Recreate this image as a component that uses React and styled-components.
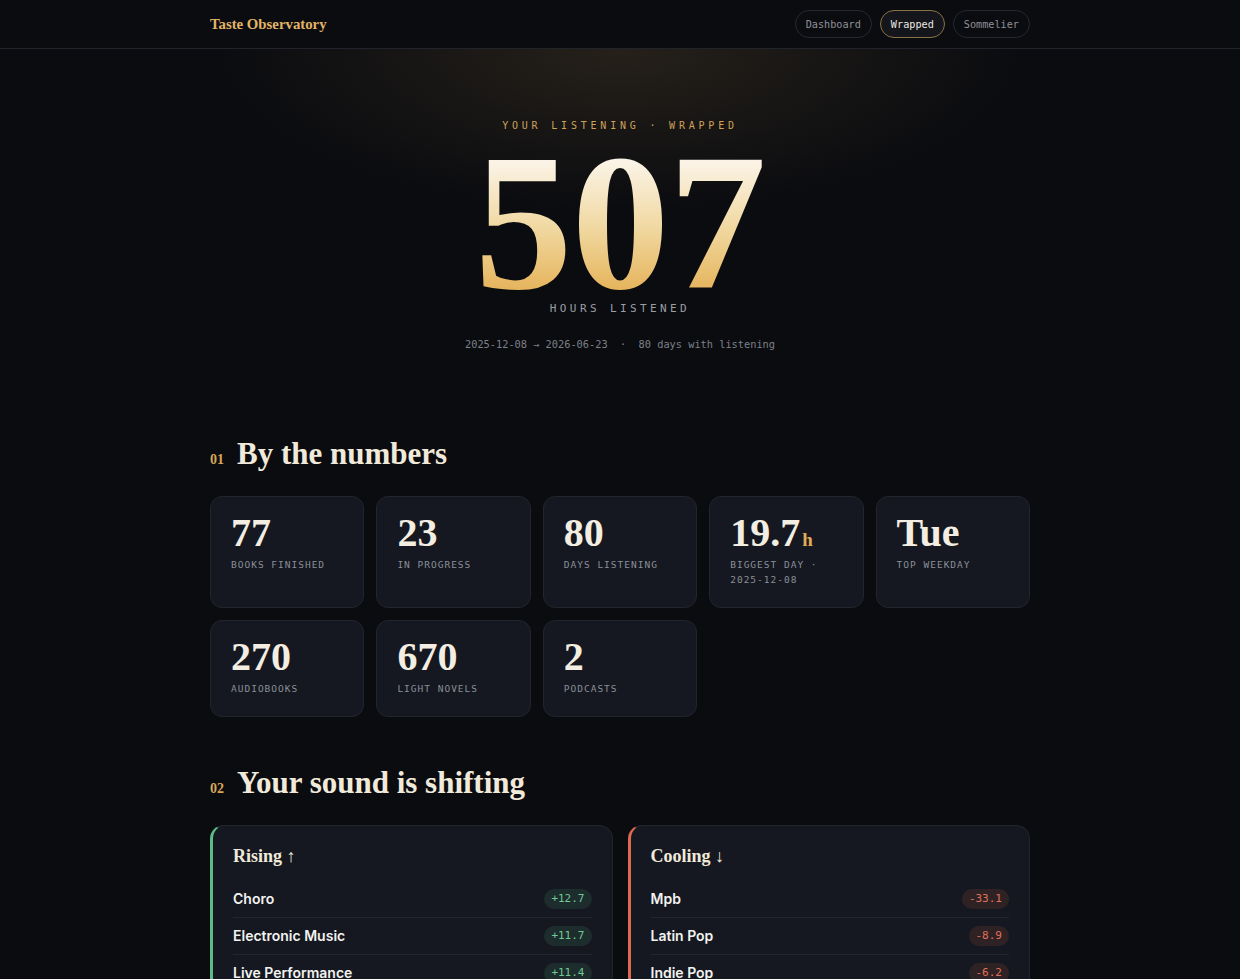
import styled, { createGlobalStyle } from "styled-components";

const serif = `"Liberation Serif", "DejaVu Serif", serif`;
const mono = `"DejaVu Sans Mono", "Liberation Mono", monospace`;
const sans = `Inter, "Noto Sans", sans-serif`;

const stats = [
  { value: "77", label: "Books finished" },
  { value: "23", label: "In progress" },
  { value: "80", label: "Days listening" },
  { value: "19.7", unit: "h", label: "Biggest day · 2025-12-08" },
  { value: "Tue", label: "Top weekday" },
  { value: "270", label: "Audiobooks" },
  { value: "670", label: "Light novels" },
  { value: "2", label: "Podcasts" },
];

const rising = [
  { name: "Choro", delta: "+12.7" },
  { name: "Electronic Music", delta: "+11.7" },
  { name: "Live Performance", delta: "+11.4" },
];

const cooling = [
  { name: "Mpb", delta: "-33.1" },
  { name: "Latin Pop", delta: "-8.9" },
  { name: "Indie Pop", delta: "-6.2" },
];

const App = () => {
  return (
    <>
      <GlobalStyle />
      <Nav>
        <NavInner>
          <Logo>Taste Observatory</Logo>
          <Pills>
            <Pill>Dashboard</Pill>
            <Pill active>Wrapped</Pill>
            <Pill>Sommelier</Pill>
          </Pills>
        </NavInner>
      </Nav>

      <Hero>
        <Eyebrow>Your listening · Wrapped</Eyebrow>
        <BigNumber>507</BigNumber>
        <BigLabel>Hours listened</BigLabel>
        <Range>2025-12-08 → 2026-06-23 &nbsp;·&nbsp; 80 days with listening</Range>
      </Hero>

      <Main>
        <Section>
          <SectionHead>
            <SectionNum>01</SectionNum>
            <SectionTitle>By the numbers</SectionTitle>
          </SectionHead>
          <StatGrid>
            {stats.map((s) => (
              <StatCard key={s.label}>
                <StatValue>
                  {s.value}
                  {s.unit && <StatUnit>{s.unit}</StatUnit>}
                </StatValue>
                <StatLabel>{s.label}</StatLabel>
              </StatCard>
            ))}
          </StatGrid>
        </Section>

        <Section>
          <SectionHead>
            <SectionNum>02</SectionNum>
            <SectionTitle>Your sound is shifting</SectionTitle>
          </SectionHead>
          <ShiftGrid>
            <ShiftPanel tone="up">
              <PanelTitle>Rising ↑</PanelTitle>
              {rising.map((r) => (
                <ShiftRow key={r.name}>
                  <Genre>{r.name}</Genre>
                  <Delta tone="up">{r.delta}</Delta>
                </ShiftRow>
              ))}
            </ShiftPanel>
            <ShiftPanel tone="down">
              <PanelTitle>Cooling ↓</PanelTitle>
              {cooling.map((r) => (
                <ShiftRow key={r.name}>
                  <Genre>{r.name}</Genre>
                  <Delta tone="down">{r.delta}</Delta>
                </ShiftRow>
              ))}
            </ShiftPanel>
          </ShiftGrid>
        </Section>
      </Main>
    </>
  );
};

const GlobalStyle = createGlobalStyle`
  body {
    margin: 0;
    background: #0b0c10;
    color: #ece6da;
    font-family: ${sans};
  }
`;

const Nav = styled.header`
  height: 48px;
  border-bottom: 1px solid #22242b;
  background: #0b0c10;
`;

const NavInner = styled.div`
  max-width: 820px;
  height: 100%;
  margin: 0 auto;
  display: flex;
  align-items: center;
  justify-content: space-between;
`;

const Logo = styled.div`
  font-family: ${serif};
  font-weight: 700;
  font-size: 14.8px;
  color: #e2b466;
`;

const Pills = styled.nav`
  display: flex;
  gap: 8px;
`;

const Pill = styled.a`
  height: 26px;
  padding: 0 10px;
  display: flex;
  align-items: center;
  border-radius: 14px;
  font-family: ${mono};
  font-size: 10.2px;
  color: ${(p) => (p.active ? "#ece8e0" : "#8e9198")};
  border: 1px solid ${(p) => (p.active ? "#8a7146" : "#262830")};
  background: ${(p) => (p.active ? "#15161b" : "transparent")};
`;

const Hero = styled.section`
  padding: 69px 0 0;
  text-align: center;
  background: radial-gradient(ellipse 400px 160px at 50% 0, rgba(190, 150, 80, 0.15), rgba(190, 150, 80, 0) 100%);
`;

const Eyebrow = styled.div`
  font-family: ${mono};
  font-size: 10px;
  line-height: 16px;
  letter-spacing: 3.8px;
  text-transform: uppercase;
  color: #cfa15a;
`;

const BigNumber = styled.div`
  margin-top: 10px;
  font-family: ${serif};
  font-weight: 700;
  font-size: 196px;
  line-height: 0.8;
  letter-spacing: -1px;
  background: linear-gradient(180deg, #fbf4e8 10%, #f0d79e 55%, #e6b55e 92%);
  -webkit-background-clip: text;
  background-clip: text;
  color: transparent;
`;

const BigLabel = styled.div`
  font-family: ${mono};
  font-size: 11px;
  line-height: 16px;
  letter-spacing: 3.4px;
  text-transform: uppercase;
  color: #9c9fa6;
`;

const Range = styled.div`
  margin-top: 19px;
  font-family: ${mono};
  font-size: 10.3px;
  line-height: 16px;
  color: #7c8088;
`;

const Main = styled.main`
  max-width: 820px;
  margin: 0 auto;
  padding: 84px 0 40px;
`;

const Section = styled.section`
  & + & {
    margin-top: 48px;
  }
`;

const SectionHead = styled.div`
  display: flex;
  align-items: baseline;
  gap: 13px;
  margin-bottom: 24px;
`;

const SectionNum = styled.span`
  font-family: ${serif};
  font-size: 14px;
  font-weight: 700;
  color: #d7a656;
`;

const SectionTitle = styled.h2`
  margin: 0;
  font-family: ${serif};
  font-weight: 700;
  font-size: 31px;
  line-height: 36px;
  color: #f1eadb;
`;

const StatGrid = styled.div`
  display: grid;
  grid-template-columns: repeat(5, 1fr);
  gap: 12px;
`;

const StatCard = styled.div`
  padding: 16px 20px 20px;
  border-radius: 12px;
  border: 1px solid #22252d;
  background: #151820;
`;

const StatValue = styled.div`
  font-family: ${serif};
  font-weight: 700;
  font-size: 40px;
  line-height: 1;
  color: #f3ede2;
`;

const StatUnit = styled.span`
  margin-left: 2px;
  font-size: 19px;
  color: #e0ad56;
`;

const StatLabel = styled.div`
  margin-top: 4px;
  font-family: ${mono};
  font-size: 9.5px;
  line-height: 15px;
  letter-spacing: 1px;
  text-transform: uppercase;
  color: #8a8f98;
`;

const ShiftGrid = styled.div`
  display: grid;
  grid-template-columns: 1fr 1fr;
  gap: 15px;
`;

const ShiftPanel = styled.div`
  padding: 18px 20px 0;
  border-radius: 14px;
  border: 1px solid #22252d;
  border-left: 3px solid ${(p) => (p.tone === "up" ? "#5dbb88" : "#dd6a4e")};
  background: #151820;
`;

const PanelTitle = styled.h3`
  margin: 0 0 13px;
  font-family: ${serif};
  font-weight: 700;
  font-size: 18px;
  line-height: 24px;
  color: #f1eadb;
`;

const ShiftRow = styled.div`
  height: 36px;
  display: flex;
  align-items: center;
  justify-content: space-between;
  border-bottom: 1px solid #23262d;
`;

const Genre = styled.span`
  font-family: ${sans};
  font-weight: 600;
  font-size: 14px;
  color: #f2f2f0;
`;

const Delta = styled.span`
  padding: 3px 7px;
  border-radius: 10px;
  font-family: ${mono};
  font-size: 11px;
  line-height: 14px;
  color: ${(p) => (p.tone === "up" ? "#6fc996" : "#e0715a")};
  background: ${(p) => (p.tone === "up" ? "rgba(93, 187, 136, 0.12)" : "rgba(221, 106, 78, 0.13)")};
`;

export default App;
